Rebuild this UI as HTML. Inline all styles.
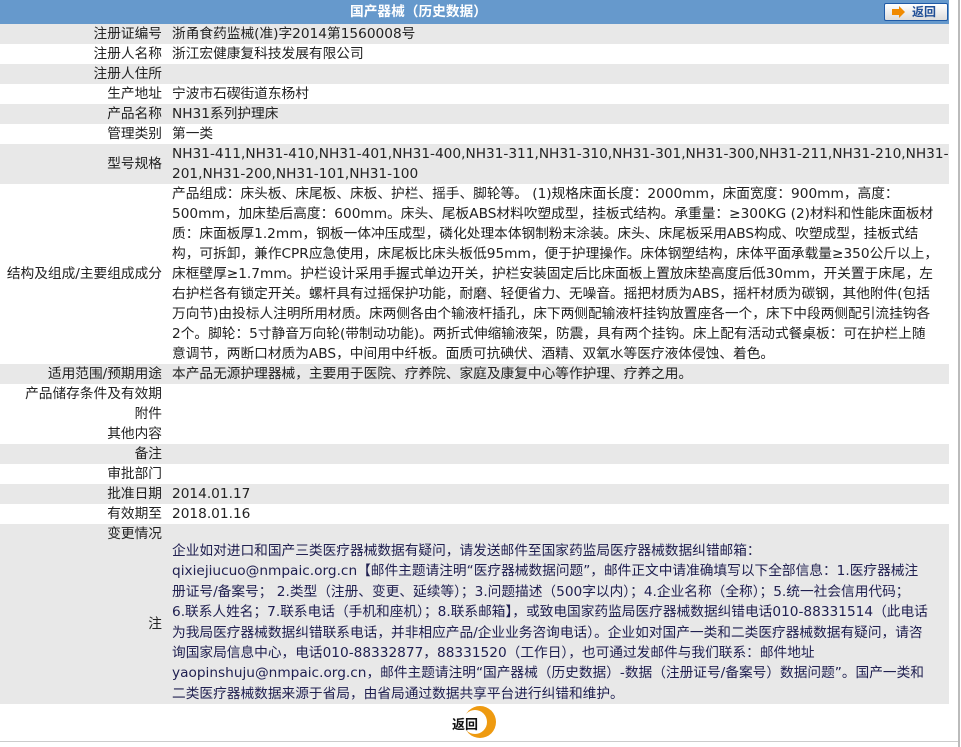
<!DOCTYPE html>
<html><head><meta charset="utf-8"><style>
*{margin:0;padding:0;box-sizing:border-box}
body{width:961px;height:747px;background:#fff;font-family:"DejaVu Sans","Noto Sans CJK SC",sans-serif;font-size:13.7px;color:#222;position:relative;overflow:hidden}
.wrap{position:absolute;left:0;top:0;width:949px}
.hd{height:24px;background:#6699cc;position:relative}
.hd .t{position:absolute;left:350px;top:2px;color:#fff;font-weight:bold;font-size:13.7px;white-space:nowrap;line-height:20px}
.btn{position:absolute;left:884px;top:3px;width:64px;height:18px;border:1px solid #1f5aa6;border-radius:2px;background:linear-gradient(#fff,#ddd);}
.btn svg{position:absolute;left:7px;top:2px}
.btn b{position:absolute;left:27px;top:0px;color:#1f4e96;font-size:12px;line-height:16px}
.r{display:flex;line-height:20px}
.r.g{background:#e8e8e8}
.l{width:162px;text-align:right;flex:none;white-space:nowrap}
.v{padding-left:10px;white-space:nowrap}
.n{color:#1f1f50}
.sb{position:absolute;left:958px;top:0;width:2px;height:747px;background:#bbb}
.bl{position:absolute;left:0;top:741px;width:958px;height:1px;background:#ccc}
</style></head><body>
<div class="wrap">
<div class="hd"><span class="t">国产器械（历史数据）</span>
<div class="btn"><svg width="14" height="12" viewBox="0 0 14 12"><rect x="0" y="3" width="7" height="6" fill="#f08a00"/><polygon points="7,0 13,6 7,12" fill="#f08a00"/></svg><b>返回</b></div></div>
<div class="r g"><div class="l">注册证编号</div><div class="v">浙甬食药监械(准)字2014第1560008号</div></div>
<div class="r"><div class="l">注册人名称</div><div class="v">浙江宏健康复科技发展有限公司</div></div>
<div class="r g"><div class="l">注册人住所</div><div class="v"></div></div>
<div class="r"><div class="l">生产地址</div><div class="v">宁波市石碶街道东杨村</div></div>
<div class="r g"><div class="l">产品名称</div><div class="v">NH31系列护理床</div></div>
<div class="r"><div class="l">管理类别</div><div class="v">第一类</div></div>
<div class="r g" style="align-items:center"><div class="l">型号规格</div><div class="v">NH31-411,NH31-410,NH31-401,NH31-400,NH31-311,NH31-310,NH31-301,NH31-300,NH31-211,NH31-210,NH31-<br>201,NH31-200,NH31-101,NH31-100</div></div>
<div class="r" style="align-items:center"><div class="l">结构及组成/主要组成成分</div><div class="v">产品组成：床头板、床尾板、床板、护栏、摇手、脚轮等。 (1)规格床面长度：2000mm，床面宽度：900mm，高度：<br>500mm，加床垫后高度：600mm。床头、尾板ABS材料吹塑成型，挂板式结构。承重量：≥300KG (2)材料和性能床面板材<br>质：床面板厚1.2mm，钢板一体冲压成型，磷化处理本体钢制粉末涂装。床头、床尾板采用ABS构成、吹塑成型，挂板式结<br>构，可拆卸，兼作CPR应急使用，床尾板比床头板低95mm，便于护理操作。床体钢塑结构，床体平面承载量≥350公斤以上，<br>床框壁厚≥1.7mm。护栏设计采用手握式单边开关，护栏安装固定后比床面板上置放床垫高度后低30mm，开关置于床尾，左<br>右护栏各有锁定开关。螺杆具有过摇保护功能，耐磨、轻便省力、无噪音。摇把材质为ABS，摇杆材质为碳钢，其他附件(包括<br>万向节)由投标人注明所用材质。床两侧各由个输液杆插孔，床下两侧配输液杆挂钩放置座各一个，床下中段两侧配引流挂钩各<br>2个。脚轮：5寸静音万向轮(带制动功能)。两折式伸缩输液架，防震，具有两个挂钩。床上配有活动式餐桌板：可在护栏上随<br>意调节，两断口材质为ABS，中间用中纤板。面质可抗碘伏、酒精、双氧水等医疗液体侵蚀、着色。</div></div>
<div class="r g"><div class="l">适用范围/预期用途</div><div class="v">本产品无源护理器械，主要用于医院、疗养院、家庭及康复中心等作护理、疗养之用。</div></div>
<div class="r"><div class="l">产品储存条件及有效期</div><div class="v"></div></div>
<div class="r"><div class="l">附件</div><div class="v"></div></div>
<div class="r"><div class="l">其他内容</div><div class="v"></div></div>
<div class="r g"><div class="l">备注</div><div class="v"></div></div>
<div class="r"><div class="l">审批部门</div><div class="v"></div></div>
<div class="r g"><div class="l">批准日期</div><div class="v">2014.01.17</div></div>
<div class="r"><div class="l">有效期至</div><div class="v">2018.01.16</div></div>
<div class="r g"><div class="l">变更情况</div><div class="v"></div></div>
<div class="r g" style="align-items:center;height:160px;line-height:20.4px"><div class="l">注</div><div class="v n" style="margin-top:-3px">企业如对进口和国产三类医疗器械数据有疑问，请发送邮件至国家药监局医疗器械数据纠错邮箱：<br>qixiejiucuo@nmpaic.org.cn【邮件主题请注明“医疗器械数据问题”，邮件正文中请准确填写以下全部信息：1.医疗器械注<br>册证号/备案号； 2.类型（注册、变更、延续等）；3.问题描述（500字以内）；4.企业名称（全称）；5.统一社会信用代码；<br>6.联系人姓名；7.联系电话（手机和座机）；8.联系邮箱】，或致电国家药监局医疗器械数据纠错电话010-88331514（此电话<br>为我局医疗器械数据纠错联系电话，并非相应产品/企业业务咨询电话）。企业如对国产一类和二类医疗器械数据有疑问，请咨<br>询国家局信息中心，电话010-88332877，88331520（工作日），也可通过发邮件与我们联系：邮件地址<br>yaopinshuju@nmpaic.org.cn，邮件主题请注明“国产器械（历史数据）-数据（注册证号/备案号）数据问题”。国产一类和<br>二类医疗器械数据来源于省局，由省局通过数据共享平台进行纠错和维护。</div></div>
</div>
<svg style="position:absolute;left:462px;top:705px" width="36" height="34" viewBox="0 0 36 34"><circle cx="18" cy="17" r="16" fill="#ee9a10"/><circle cx="13" cy="17" r="12" fill="#fff"/></svg>
<div style="position:absolute;left:452px;top:714px;font-weight:bold;font-size:13px;color:#111">返回</div>
<div class="sb"></div><div class="bl"></div>
</body></html>
